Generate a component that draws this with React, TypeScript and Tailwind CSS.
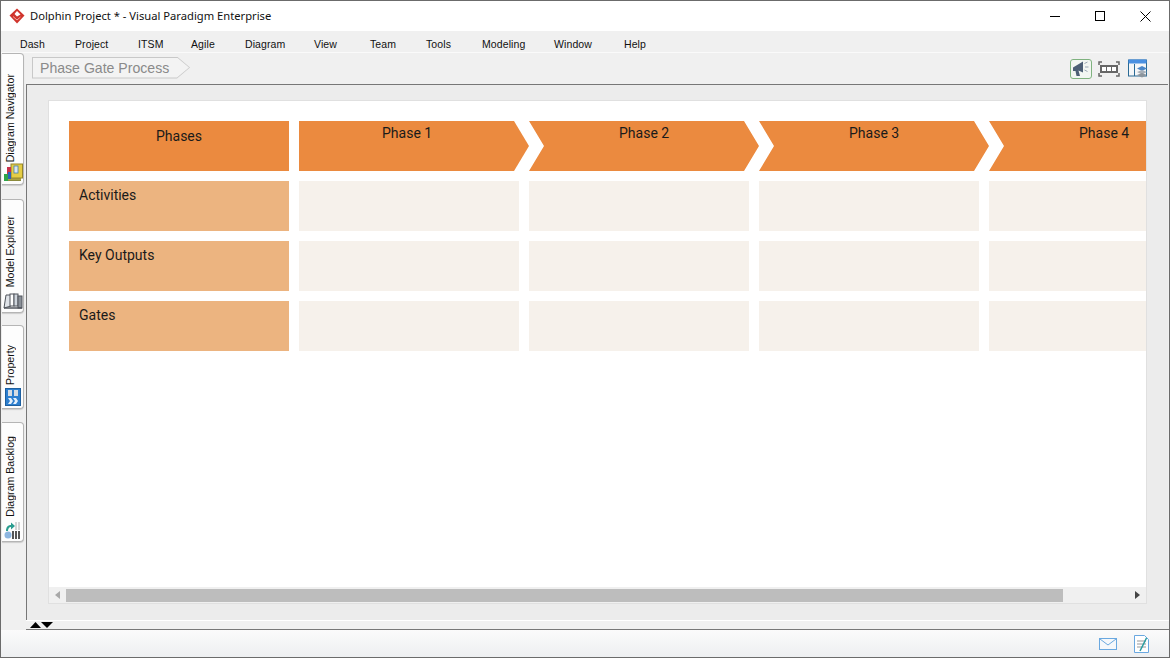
import React from "react";

const menus = [
  ["Dash", 20], ["Project", 75], ["ITSM", 138], ["Agile", 191], ["Diagram", 245], ["View", 314],
  ["Team", 370], ["Tools", 426], ["Modeling", 482], ["Window", 554], ["Help", 624],
] as const;

function Logo() {
  return (
    <svg width="16" height="16" viewBox="0 0 16 16">
      <path d="M8 0.5 15.5 7.5 8 15.5 0.5 7.5Z" fill="#d0342c" />
      <path d="M8 3 11.5 6.5 8 8.5 5.5 6Z" fill="#fff" />
      <path d="M4 8.5 8 12 11.5 9" fill="none" stroke="#f0a8a0" strokeWidth="1" />
    </svg>
  );
}

function IconNavigator() {
  return (
    <svg width="20" height="20" viewBox="0 0 20 20">
      <path d="M4 18h14v-3H4z" fill="#8c8a3c" />
      <path d="M3 16h15" stroke="#c9b84a" />
      <rect x="8" y="1" width="11.5" height="14" fill="#e5cd45" stroke="#94862c" />
      <rect x="11" y="3" width="4" height="7" fill="#dfe6ea" stroke="#3f7fb5" strokeWidth="0.8" />
      <rect x="4" y="4" width="4" height="7" fill="#c9304a" />
      <rect x="1" y="11" width="4" height="7" fill="#2fa44a" />
      <rect x="5" y="9" width="3" height="7" fill="#2c62b8" />
    </svg>
  );
}

function IconExplorer() {
  return (
    <svg width="20" height="18" viewBox="0 0 20 18">
      <path d="M1 16 3 3h5v11z" fill="#dfe3e8" stroke="#50555c" />
      <rect x="7" y="2" width="4" height="12" fill="#fff" stroke="#50555c" />
      <rect x="11" y="2" width="4" height="12" fill="#cfd5dc" stroke="#50555c" />
      <rect x="15" y="4" width="4" height="12" fill="#8a9098" stroke="#50555c" />
      <path d="M1 16h18" stroke="#50555c" strokeWidth="1.5" />
    </svg>
  );
}

function IconProperty() {
  return (
    <svg width="16" height="18" viewBox="0 0 16 18">
      <rect x="0.5" y="0.5" width="15" height="17" fill="#2d7fcf" stroke="#1d5f9f" />
      <rect x="3" y="2" width="4" height="6" fill="#d7dde3" />
      <rect x="9" y="2" width="4" height="6" fill="#d7dde3" />
      <path d="M3 10h3l2 3-2 3H3l2-3zM8 10h3l2 3-2 3H8l2-3z" fill="#e6f0fa" />
    </svg>
  );
}

function IconBacklog() {
  return (
    <svg width="18" height="19" viewBox="0 0 18 19">
      <rect x="11" y="1" width="2" height="8" fill="#d5d5d5" />
      <rect x="14" y="1" width="2" height="8" fill="#d5d5d5" />
      <rect x="8" y="10" width="2" height="8" fill="#555" />
      <rect x="11" y="10" width="2" height="8" fill="#555" />
      <rect x="14" y="10" width="2" height="8" fill="#555" />
      <circle cx="4" cy="14" r="3.5" fill="#8db6e0" />
      <path d="M2 10C2 6 4 4 7 4V1.5L11 5 7 8.5V6C5 6 4 8 4 10Z" fill="#2a9d8f" />
    </svg>
  );
}

function SideTab({ label, icon, h, mt, mb }: { label: string; icon: React.ReactNode; h: string; mt: string; mb: string }) {
  return (
    <div className={`${h} ${mt} w-[22px] ml-px bg-[#fdfdfd] border border-l-0 border-[#b5b5b5] rounded-tr-[4px] rounded-br-[4px] flex flex-col items-center justify-end pb-px shadow-[0_1px_1px_#ccc]`}>
      <span className={`${mb} [writing-mode:vertical-rl] rotate-180 text-[10.6px] leading-[14px] text-[#111] font-['Liberation_Sans',sans-serif] mr-[6px] whitespace-nowrap`}>
        {label}
      </span>
      <div className="h-[20px] flex items-center justify-center">{icon}</div>
    </div>
  );
}

function Chevron({ label, first }: { label: string; first?: boolean }) {
  return (
    <div
      className={`w-[230px] shrink-0 h-[50px] bg-[#eb8a3f] ${
        first
          ? "[clip-path:polygon(0_0,215px_0,230px_25px,215px_50px,0_50px)] pl-[83px]"
          : "[clip-path:polygon(0_0,215px_0,230px_25px,215px_50px,0_50px,15px_25px)] pl-[90px]"
      } pt-[2px] text-[14px] leading-[20px] text-[#1a1a1a] font-['Roboto',sans-serif] whitespace-nowrap`}
    >
      {label}
    </div>
  );
}

function Row({ label }: { label: string }) {
  return (
    <div className="flex gap-[10px] h-[50px]">
      <div className="w-[220px] shrink-0 bg-[#ecb480] pl-[10px] pt-[4px] text-[14px] leading-[20px] text-[#1a1a1a] font-['Roboto',sans-serif]">{label}</div>
      {[0, 1, 2, 3].map((i) => (
        <div key={i} className="w-[220px] shrink-0 bg-[#f6f1eb]" />
      ))}
    </div>
  );
}

export default function App() {
  return (
    <div className="w-[1170px] h-[658px] flex flex-col border border-[#6b6b6b] bg-[#f0f0f0] overflow-hidden font-['Noto_Sans',sans-serif]">
      {/* title bar */}
      <div className="h-[30px] shrink-0 bg-white flex items-center">
        <div className="ml-[8px] w-[16px] h-[16px]"><Logo /></div>
        <span className="ml-[5px] text-[11.2px] text-[#111] whitespace-nowrap">Dolphin Project * - Visual Paradigm Enterprise</span>
        <div className="ml-auto flex items-center">
          <svg className="mr-[35px]" width="10" height="10" viewBox="0 0 10 10"><path d="M0 5.5h10" stroke="#000" /></svg>
          <svg className="mr-[35px]" width="10" height="10" viewBox="0 0 10 10"><rect x="0.5" y="0.5" width="9" height="9" fill="none" stroke="#000" /></svg>
          <svg className="mr-[18px]" width="11" height="11" viewBox="0 0 11 11"><path d="M0.5 0.5l10 10M10.5 0.5l-10 10" stroke="#000" /></svg>
        </div>
      </div>
      {/* menu bar */}
      <div className="relative h-[22px] shrink-0 bg-[#f0f0f0] border-b border-[#fafafa]">
        {menus.map(([m, x]) => (
          <span key={m} style={{ left: x - 1 }} className="absolute top-[6px] text-[10.5px] leading-[14px] text-[#111] font-['Liberation_Sans',sans-serif] tracking-[0.1px]">{m}</span>
        ))}
      </div>
      {/* body */}
      <div className="flex-1 flex min-h-0">
        <div className="w-[25px] shrink-0 flex flex-col">
          <SideTab label="Diagram Navigator" icon={<IconNavigator />} h="h-[132px]" mt="mt-0" mb="mb-[1px]" />
          <SideTab label="Model Explorer" icon={<IconExplorer />} h="h-[114px]" mt="mt-[14px]" mb="mb-[4px]" />
          <SideTab label="Property" icon={<IconProperty />} h="h-[84px]" mt="mt-[12px]" mb="mb-[2px]" />
          <SideTab label="Diagram Backlog" icon={<IconBacklog />} h="h-[120px]" mt="mt-[13px]" mb="mb-[3px]" />
        </div>
        <div className="flex-1 min-w-0 flex flex-col">
          {/* breadcrumb toolbar */}
          <div className="h-[31px] shrink-0 flex items-center">
            <div className="ml-[6px] mt-[-2px] relative h-[22px] w-[158px]">
              <div className="absolute inset-0 bg-[#c8c8c8] [clip-path:polygon(0_0,145px_0,158px_11px,145px_22px,0_22px)]" />
              <div className="absolute inset-px bg-[#f3f3f3] [clip-path:polygon(0_0,144px_0,156px_10px,144px_20px,0_20px)] pl-[7px] text-[14.1px] leading-[21px] text-[#8a8a8a] font-['Liberation_Sans',sans-serif] whitespace-nowrap">
                Phase Gate Process
              </div>
            </div>
            <div className="ml-auto flex items-center">
              <div className="w-[22px] h-[20px] rounded-[3px] border border-[#7fb27f] bg-[#f2f6f2] flex items-center justify-center">
                <svg width="18" height="16" viewBox="0 0 18 16">
                  <path d="M1 6.5l10-6v11L6.5 9.5 8 15H4.5L3.5 10H1z" fill="#4d5f75" />
                  <path d="M12.5 2.5l3-1.5M13 6h3.5M12.5 9l3 1.5" stroke="#9aa6b2" strokeWidth="1" />
                </svg>
              </div>
              <svg className="ml-[6px]" width="22" height="16" viewBox="0 0 22 16">
                <path d="M1 4V1h3M18 1h3v3M21 12v3h-3M4 15H1v-3" fill="none" stroke="#666" strokeWidth="1.5" />
                <rect x="2" y="4" width="18" height="8" fill="#666" />
                <rect x="4" y="6" width="4" height="4" fill="#fff" />
                <rect x="9" y="6" width="4" height="4" fill="#fff" />
                <rect x="14" y="6" width="4" height="4" fill="#fff" />
              </svg>
              <svg className="ml-[8px] mr-[21px]" width="20" height="19" viewBox="0 0 20 19">
                <rect x="0.5" y="1" width="18" height="16" fill="#f4f6f8" stroke="#2a6a95" />
                <rect x="0.5" y="0.5" width="18" height="4" rx="1" fill="#4a90e2" />
                <path d="M6.5 5v12" stroke="#2a6a95" />
                <path d="M14 7l5 2.5-5 2.5-5-2.5z" fill="#4a86c8" />
                <path d="M14 11l5 2-5 2.5-5-2.5z" fill="#a8b0b8" />
                <path d="M14 14l5 2-5 2.5-5-2.5z" fill="#8d959d" />
              </svg>
            </div>
          </div>
          {/* canvas frame */}
          <div className="flex-1 min-h-0 bg-[#ececec] border-t border-l border-[#777] mr-[1px] pl-[21px] pr-[21px] pt-[15px] pb-[16px]">
            <div className="h-full border border-[#e0e0e0] flex flex-col">
              <div className="flex-1 min-h-0 bg-white overflow-hidden pl-[20px] pt-[20px]">
                <div className="flex flex-col gap-[10px] w-[1200px]">
                  <div className="flex gap-[10px] h-[50px]">
                    <div className="w-[220px] shrink-0 bg-[#eb8a3f] text-center pt-[5px] text-[14px] leading-[20px] text-[#1a1a1a] font-['Roboto',sans-serif]">Phases</div>
                    <div className="flex">
                      <Chevron label="Phase 1" first />
                      <Chevron label="Phase 2" />
                      <Chevron label="Phase 3" />
                      <Chevron label="Phase 4" />
                    </div>
                  </div>
                  <Row label="Activities" />
                  <Row label="Key Outputs" />
                  <Row label="Gates" />
                </div>
              </div>
              <div className="h-[16px] shrink-0 bg-[#f0f0f0] flex items-center">
                <svg className="ml-[6px]" width="5" height="8" viewBox="0 0 5 8"><path d="M5 0v8L0 4z" fill="#a8a8a8" /></svg>
                <div className="ml-[6px] w-[997px] h-[13px] bg-[#bdbdbd]" />
                <svg className="ml-auto mr-[6px]" width="5" height="8" viewBox="0 0 5 8"><path d="M0 0v8l5-4z" fill="#444" /></svg>
              </div>
            </div>
          </div>
          {/* strip with arrows */}
          <div className="h-[10px] shrink-0 border-t border-white bg-[#f0f0f0] flex items-start">
            <svg className="mt-px" width="36" height="6" viewBox="0 0 36 6">
              <path d="M4 6 9.5 0 15 6z" fill="#000" />
              <path d="M15 0H27L21 6z" fill="#000" />
            </svg>
          </div>
        </div>
      </div>
      {/* status bar */}
      <div className="relative h-[27px] shrink-0 bg-gradient-to-b from-[#fbfbfb] to-[#edeff1] flex items-center">
        <div className="absolute left-[25px] right-0 top-[-1px] h-[1px] bg-[#777]" />
        <div className="ml-auto flex items-center">
          <svg width="18" height="12" viewBox="0 0 18 12"><rect x="0.5" y="0.5" width="17" height="11" fill="#f5f8fb" stroke="#6aa8e0" /><path d="M1 1l8 6 8-6" fill="none" stroke="#6aa8e0" /></svg>
          <svg className="ml-[17px] mr-[20px]" width="15" height="18" viewBox="0 0 15 18">
            <path d="M0.5 0.5h10l4 4v13H0.5z" fill="#fff" stroke="#6aa8e0" />
            <path d="M3 6h9M3 9h9M3 12h9" stroke="#bbb" strokeWidth="1.5" />
            <path d="M12.5 3 6 16" stroke="#2a9d9f" strokeWidth="1.5" />
          </svg>
        </div>
      </div>
    </div>
  );
}
